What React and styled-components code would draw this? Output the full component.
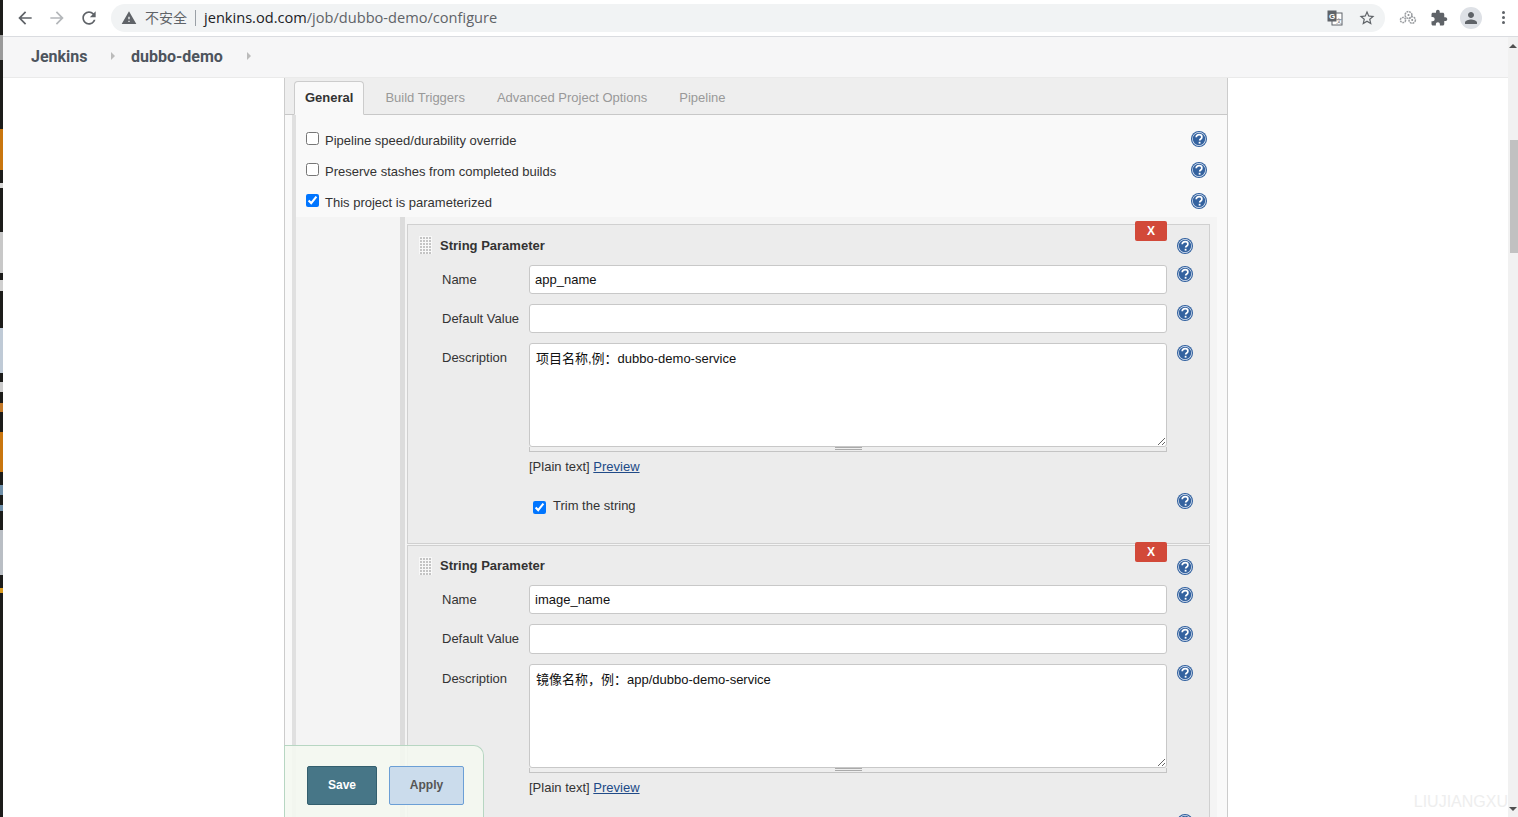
import React from 'react';
import styled, { createGlobalStyle } from 'styled-components';

const Global = createGlobalStyle`
  html, body { margin: 0; padding: 0; height: 100%; overflow: hidden; background: #fff; }
  * { box-sizing: border-box; }
`;

const Page = styled.div`
  position: relative;
  display: flex;
  width: 1518px;
  height: 817px;
  overflow: hidden;
  font-family: 'Liberation Sans', Arial, sans-serif;
  font-size: 13px;
  color: #333;
`;

const WindowSliver = styled.div`
  width: 3px;
  flex: none;
  background: linear-gradient(180deg,
    #1c1c1a 0 35px, #9a9a9a 35px 60px, #1c1c1a 60px 129px,
    #c9760f 129px 170px, #1c1c1a 170px 183px, #d8d8d8 183px 188px, #1c1c1a 188px 232px,
    #c8c8c8 232px 273px, #1c1c1a 273px 280px, #d0d0d0 280px 291px, #1c1c1a 291px 328px,
    #bfcad6 328px 373px, #1c1c1a 373px 382px, #cccccc 382px 392px, #1c1c1a 392px 403px,
    #c47a2a 403px 412px, #1c1c1a 412px 432px, #c9760f 432px 472px, #1c1c1a 472px 485px,
    #6f8fa8 485px 495px, #1c1c1a 495px 505px, #6f8fa8 505px 511px, #1c1c1a 511px 530px,
    #b9bec4 530px 575px, #1c1c1a 575px 588px, #d89a20 588px 593px, #1c1c1a 593px);
`;

const Window = styled.div`
  flex: 1;
  min-width: 0;
  display: flex;
  flex-direction: column;
`;

const Toolbar = styled.div`
  height: 37px;
  flex: none;
  display: flex;
  align-items: center;
  background: #fff;
  border-bottom: 1px solid #dadce0;
  padding-bottom: 1px;
`;

const NavIcon = styled.svg`
  width: ${p => p.$size || 20}px;
  height: ${p => p.$size || 20}px;
  margin-left: ${p => p.$left || 0}px;
  flex: none;
  fill: ${p => p.$fill || '#5f6368'};
`;

const Omnibox = styled.div`
  width: 1274px;
  height: 28px;
  margin-left: 12px;
  flex: none;
  display: flex;
  align-items: center;
  padding: 0 9px 0 10px;
  border-radius: 14px;
  background: #f1f3f4;
`;

const NotSecure = styled.span`
  margin: 0 0 2px 8px;
  font-family: 'Noto Sans CJK SC', sans-serif;
  font-size: 14px;
  color: #5f6368;
`;

const Divider = styled.span`
  width: 1px;
  height: 16px;
  margin: 0 8px 0 8px;
  background: #9aa0a6;
`;

const Url = styled.span`
  margin-bottom: 2px;
  font-family: 'Open Sans', 'Noto Sans', sans-serif;
  font-size: 14.6px;
  color: #5f6368;
  b { font-weight: 400; color: #202124; }
`;

const Spacer = styled.span`
  flex: 1;
`;

const Avatar = styled.span`
  width: 22px;
  height: 22px;
  margin-left: 12px;
  flex: none;
  display: flex;
  align-items: center;
  justify-content: center;
  border-radius: 50%;
  background: #dee1e6;
`;

const Dots = styled.span`
  margin-left: 20px;
  display: flex;
  flex-direction: column;
  gap: 2px;
  i { width: 3px; height: 3px; border-radius: 50%; background: #5f6368; display: block; }
`;

const Viewport = styled.div`
  flex: 1;
  min-height: 0;
  display: flex;
`;

const Content = styled.div`
  flex: 1;
  min-width: 0;
  overflow: hidden;
`;

const Breadcrumbs = styled.div`
  height: 41px;
  display: flex;
  align-items: center;
  padding: 0 0 2px 28px;
  background: #f6f6f7;
  border-bottom: 1px solid #eaeaea;
  font-family: Roboto, 'Liberation Sans', sans-serif;
  font-size: 16px;
  font-weight: 700;
  color: #4d545d;
`;

const Crumb = styled.span`
  width: ${p => p.$width}px;
  flex: none;
`;

const CrumbArrow = styled.span`
  width: 0;
  height: 0;
  flex: none;
  margin-right: 16px;
  border-left: 4px solid #bbb;
  border-top: 4px solid transparent;
  border-bottom: 4px solid transparent;
`;

const Panel = styled.div`
  width: 944px;
  margin-left: 281px;
  background: #f9f9f9;
  border-left: 1px solid #ccc;
  border-right: 1px solid #ccc;
`;

const TabBar = styled.div`
  height: 37px;
  display: flex;
  align-items: flex-end;
  padding-left: 9px;
  background: #eee;
  border-bottom: 1px solid #c8c8c8;
`;

const Tab = styled.div`
  height: ${p => (p.$active ? 34 : 33)}px;
  margin-right: 10px;
  margin-bottom: -1px;
  padding: 0 10px 2px;
  display: flex;
  align-items: center;
  border: 1px solid ${p => (p.$active ? '#ccc' : 'transparent')};
  border-bottom-color: ${p => (p.$active ? '#f9f9f9' : 'transparent')};
  border-radius: 4px 4px 0 0;
  background: ${p => (p.$active ? '#f9f9f9' : 'transparent')};
  color: ${p => (p.$active ? '#333' : '#999')};
  font-weight: ${p => (p.$active ? 700 : 400)};
`;

const Section = styled.div`
  margin-left: 7px;
  padding-top: 8px;
  border-left: 4px solid #e0e0e0;
`;

const OptionRow = styled.div`
  height: 31px;
  display: flex;
  align-items: center;
  padding: 0 20px 0 10px;
`;

const Check = styled.input.attrs({ type: 'checkbox', readOnly: true })`
  width: 13px;
  height: 13px;
  margin: 0 6px 0 0;
  flex: none;
  accent-color: #0075ff;
`;

const OptionText = styled.span`
  flex: 1;
  position: relative;
  top: 2px;
`;

const HelpGlyph = styled.svg`
  width: 16px;
  height: 16px;
  flex: none;
  margin-top: ${p => p.$down || 0}px;
  margin-bottom: ${p => p.$lift || 0}px;
`;

const Nested = styled.div`
  display: flex;
  margin: 1px 10px 0 0;
  padding: 7px 7px 0 0;
  background: #f4f4f4;
`;

const NestedBar = styled.div`
  width: 5px;
  margin-left: 104px;
  margin-top: -7px;
  flex: none;
  background: #dcdcdc;
`;

const Params = styled.div`
  flex: 1;
  min-width: 0;
  margin-left: 2px;
  display: flex;
  flex-direction: column;
  gap: 1px;
`;

const ParamBox = styled.div`
  position: relative;
  background: #ececec;
  border: 1px solid #d0d0d0;
`;

const DeleteButton = styled.div`
  position: absolute;
  top: -4px;
  right: 42px;
  width: 32px;
  height: 20px;
  display: flex;
  align-items: center;
  justify-content: center;
  background: #d24939;
  border-radius: 2px;
  color: #fff;
  font-size: 12px;
  font-weight: 700;
`;

const ParamHead = styled.div`
  height: ${p => (p.$tight ? 39 : 40)}px;
  display: flex;
  align-items: center;
  padding: 0 16px 0 11px;
  font-weight: 700;
  color: #333;
`;

const Handle = styled.svg`
  width: 13px;
  height: 18px;
  margin-right: 8px;
  flex: none;
`;

const HeadTitle = styled.span`
  flex: 1;
`;

const FieldRow = styled.div`
  display: grid;
  grid-template-columns: 77px 638px 16px;
  column-gap: 10px;
  align-items: start;
  padding-left: 34px;
  margin-bottom: 10px;
`;

const FieldLabel = styled.div`
  padding-top: 7px;
  white-space: nowrap;
`;

const TextInput = styled.input.attrs({ type: 'text', readOnly: true })`
  width: 100%;
  height: ${p => (p.$tall ? 30 : 29)}px;
  padding: 0 5px;
  border: 1px solid #c8c8c8;
  border-radius: 3px;
  background: #fff;
  font-family: 'Liberation Sans', Arial, sans-serif;
  font-size: 13px;
  color: #111;
  outline: none;
`;

const AreaWrap = styled.div`
  width: 100%;
`;

const TextArea = styled.textarea.attrs({ readOnly: true })`
  display: block;
  width: 100%;
  height: 104px;
  padding: 7px 6px 6px;
  border: 1px solid #c8c8c8;
  border-radius: 3px;
  background: #fff;
  font-family: 'Liberation Sans', 'Noto Sans CJK SC', sans-serif;
  font-size: 13px;
  line-height: 15px;
  color: #111;
  resize: vertical;
  outline: none;
`;

const Grippie = styled.div`
  height: 5px;
  display: flex;
  justify-content: center;
  border: 1px solid #c4c4c4;
  border-top: 0;
  background: #eee;
  i {
    width: 27px;
    height: 3px;
    border-top: 1px solid #aaa;
    border-bottom: 1px solid #aaa;
    display: block;
  }
`;

const PreviewLine = styled.div`
  height: 20px;
  margin: -5px 0 0 121px;
  line-height: 20px;
  a { color: #204a87; text-decoration: underline; }
`;

const TrimRow = styled.div`
  display: flex;
  align-items: center;
  height: 24px;
  margin: 16px 0 26px;
  padding: 0 16px 0 125px;
`;

const TrimText = styled.span`
  flex: 1;
`;

const TrimCheck = styled(Check)`
  position: relative;
  top: 2px;
  margin-right: 7px;
`;

const Scrollbar = styled.div`
  width: 10px;
  flex: none;
  display: flex;
  flex-direction: column;
  align-items: flex-end;
  background: #f1f1f1;
`;

const ScrollArrow = styled.span`
  width: 0;
  height: 0;
  margin: ${p => (p.$down ? 'auto 1px 6px 0' : '7px 1px 0 0')};
  border-left: 4px solid transparent;
  border-right: 4px solid transparent;
  ${p => (p.$down ? 'border-top: 4px solid #505050;' : 'border-bottom: 4px solid #505050;')}
`;

const ScrollThumb = styled.span`
  width: 8px;
  height: 113px;
  margin-top: 92px;
  background: #c1c1c1;
`;

const BottomBar = styled.div`
  position: absolute;
  left: 284px;
  bottom: 0;
  width: 200px;
  height: 72px;
  display: flex;
  gap: 12px;
  padding: 20px 0 0 22px;
  align-items: flex-start;
  background: rgba(244, 248, 240, 0.88);
  border: 1px solid #b7d6c2;
  border-bottom: 0;
  border-radius: 0 10px 0 0;
`;

const ActionButton = styled.div`
  height: 39px;
  width: ${p => p.$width}px;
  padding-bottom: 2px;
  display: flex;
  align-items: center;
  justify-content: center;
  border-radius: 2px;
  border: 1px solid ${p => (p.$primary ? '#335f6e' : '#6b9fd6')};
  background: ${p => (p.$primary ? '#477687' : '#cbdcec')};
  color: ${p => (p.$primary ? '#fff' : '#555')};
  font-size: 12px;
  font-weight: 700;
`;

const Watermark = styled.div`
  position: absolute;
  right: 10px;
  bottom: 6px;
  color: #eee;
  font-size: 16px;
`;

const Help = ({ down, lift }) => (
  <HelpGlyph $down={down} $lift={lift} viewBox="0 0 16 16">
    <circle cx="8" cy="8" r="8" fill="#2f5f9e" />
    <circle cx="8" cy="8" r="6.9" fill="#e3ebf5" />
    <circle cx="8" cy="8" r="6.2" fill="#34629f" />
    <path d="M5.2 6.2c0-1.6 1.2-2.5 2.9-2.5s2.8 1 2.8 2.3c0 2-2.2 1.9-2.2 3.6" fill="none" stroke="#fff" strokeWidth="1.7" />
    <rect x="7.7" y="10.8" width="1.8" height="1.8" fill="#fff" />
  </HelpGlyph>
);

const dragDots = [];
for (let y = 0; y < 6; y++) for (let x = 0; x < 4; x++) dragDots.push([x * 3 + 1, y * 3 + 1]);

const DragHandle = () => (
  <Handle viewBox="0 0 13 18">
    <rect width="13" height="18" fill="#f8f8f8" />
    {dragDots.map(([x, y]) => <rect key={`${x}-${y}`} x={x} y={y} width="2" height="2" fill="#c4c4c4" />)}
  </Handle>
);

const Parameter = ({ name, description, tight }) => (
  <ParamBox>
    <DeleteButton>X</DeleteButton>
    <ParamHead $tight={tight}>
      <DragHandle />
      <HeadTitle>String Parameter</HeadTitle>
      <Help down={tight ? 2 : 2} />
    </ParamHead>
    <FieldRow>
      <FieldLabel>Name</FieldLabel>
      <TextInput defaultValue={name} />
      <Help down={tight ? 2 : 1} />
    </FieldRow>
    <FieldRow>
      <FieldLabel>Default Value</FieldLabel>
      <TextInput $tall={tight} />
      <Help down={tight ? 2 : 1} />
    </FieldRow>
    <FieldRow>
      <FieldLabel>Description</FieldLabel>
      <AreaWrap>
        <TextArea defaultValue={description} />
        <Grippie><i /></Grippie>
      </AreaWrap>
      <Help down={tight ? 1 : 2} />
    </FieldRow>
    <PreviewLine>[Plain text] <a href="#preview">Preview</a></PreviewLine>
    <TrimRow>
      <TrimCheck defaultChecked />
      <TrimText>Trim the string</TrimText>
      <Help lift={8} />
    </TrimRow>
  </ParamBox>
);

const App = () => (
  <Page>
    <Global />
    <WindowSliver />
    <Window>
      <Toolbar>
        <NavIcon $left={12} viewBox="0 0 24 24"><path d="M20 11H7.83l5.59-5.59L12 4l-8 8 8 8 1.41-1.41L7.83 13H20v-2z" /></NavIcon>
        <NavIcon $left={12} $fill="#b4b7ba" viewBox="0 0 24 24"><path d="M4 11h12.17l-5.59-5.59L12 4l8 8-8 8-1.41-1.41L16.17 13H4v-2z" /></NavIcon>
        <NavIcon $left={12} viewBox="0 0 24 24"><path d="M17.65 6.35C16.2 4.9 14.21 4 12 4c-4.42 0-7.99 3.58-7.99 8s3.57 8 7.99 8c3.73 0 6.84-2.55 7.73-6h-2.08c-.82 2.33-3.04 4-5.65 4-3.31 0-6-2.69-6-6s2.69-6 6-6c1.66 0 3.14.69 4.22 1.78L13 11h7V4l-2.35 2.35z" /></NavIcon>
        <Omnibox>
          <NavIcon $size={16} viewBox="0 0 24 24"><path d="M1 21h22L12 2 1 21zm12-3h-2v-2h2v2zm0-4h-2v-4h2v4z" /></NavIcon>
          <NotSecure>不安全</NotSecure>
          <Divider />
          <Url><b>jenkins.od.com</b>/job/dubbo-demo/configure</Url>
          <Spacer />
          <NavIcon $size={16} viewBox="0 0 16 16">
            <rect x="5" y="3" width="10" height="12" fill="#fff" stroke="#5f6368" />
            <rect x="0.5" y="0.5" width="9" height="11" fill="#5f6368" />
            <text x="5" y="9" fontSize="8" fontWeight="700" fill="#fff" textAnchor="middle">G</text>
            <text x="12" y="13" fontSize="6" fill="#5f6368" textAnchor="middle">文</text>
          </NavIcon>
          <NavIcon $left={15} $size={18} viewBox="0 0 24 24"><path d="M22 9.24l-7.19-.62L12 2 9.19 8.63 2 9.24l5.46 4.73L5.82 21 12 17.27 18.18 21l-1.63-7.03L22 9.24zM12 15.4l-3.76 2.27 1-4.28-3.32-2.88 4.38-.38L12 6.1l1.71 4.04 4.38.38-3.32 2.88 1 4.28L12 15.4z" /></NavIcon>
        </Omnibox>
        <NavIcon $left={14} $size={18} viewBox="0 0 18 18">
          <g fill="none" stroke="#9a9da1" strokeWidth="1.5" strokeDasharray="2 0.7">
            <circle cx="9.5" cy="6" r="3.4" />
            <circle cx="4" cy="11" r="2.6" />
            <circle cx="13.2" cy="11" r="3.2" />
          </g>
          <circle cx="13.2" cy="11" r="1" fill="#8a8d91" />
          <circle cx="9.5" cy="6" r="1" fill="#8a8d91" />
        </NavIcon>
        <NavIcon $left={13} $size={18} viewBox="0 0 24 24"><path d="M20.5 11H19V7c0-1.1-.9-2-2-2h-4V3.5C13 2.12 11.88 1 10.5 1S8 2.12 8 3.5V5H4c-1.1 0-1.99.9-1.99 2v3.8H3.5c1.49 0 2.7 1.21 2.7 2.7s-1.21 2.7-2.7 2.7H2V20c0 1.1.9 2 2 2h3.8v-1.5c0-1.49 1.21-2.7 2.7-2.7 1.49 0 2.7 1.21 2.7 2.7V22H17c1.1 0 2-.9 2-2v-4h1.5c1.38 0 2.5-1.12 2.5-2.5S21.88 11 20.5 11z" /></NavIcon>
        <Avatar>
          <NavIcon $size={18} viewBox="0 0 24 24"><path d="M12 12c2.21 0 4-1.79 4-4s-1.79-4-4-4-4 1.79-4 4 1.79 4 4 4zm0 2c-2.67 0-8 1.34-8 4v2h16v-2c0-2.66-5.33-4-8-4z" /></NavIcon>
        </Avatar>
        <Dots><i /><i /><i /></Dots>
      </Toolbar>
      <Viewport>
        <Content>
          <Breadcrumbs>
            <Crumb $width={80}>Jenkins</Crumb>
            <CrumbArrow />
            <Crumb $width={116}>dubbo-demo</Crumb>
            <CrumbArrow />
          </Breadcrumbs>
          <Panel>
            <TabBar>
              <Tab $active>General</Tab>
              <Tab>Build Triggers</Tab>
              <Tab>Advanced Project Options</Tab>
              <Tab>Pipeline</Tab>
            </TabBar>
            <Section>
              <OptionRow>
                <Check />
                <OptionText>Pipeline speed/durability override</OptionText>
                <Help />
              </OptionRow>
              <OptionRow>
                <Check />
                <OptionText>Preserve stashes from completed builds</OptionText>
                <Help />
              </OptionRow>
              <OptionRow>
                <Check defaultChecked />
                <OptionText>This project is parameterized</OptionText>
                <Help />
              </OptionRow>
              <Nested>
                <NestedBar />
                <Params>
                  <Parameter name="app_name" description="项目名称,例：dubbo-demo-service" />
                  <Parameter tight name="image_name" description="镜像名称，例：app/dubbo-demo-service" />
                </Params>
              </Nested>
            </Section>
          </Panel>
        </Content>
        <Scrollbar>
          <ScrollArrow />
          <ScrollThumb />
          <ScrollArrow $down />
        </Scrollbar>
      </Viewport>
    </Window>
    <BottomBar>
      <ActionButton $primary $width={70}>Save</ActionButton>
      <ActionButton $width={75}>Apply</ActionButton>
    </BottomBar>
    <Watermark>LIUJIANGXU</Watermark>
  </Page>
);

export default App;
